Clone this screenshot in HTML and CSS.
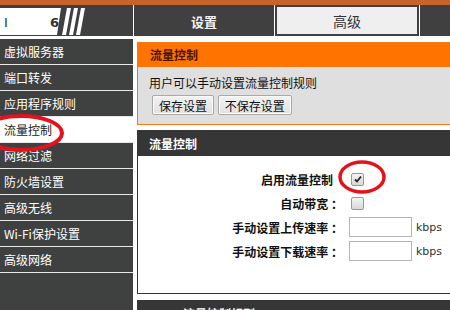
FILE: index.html
```html
<!DOCTYPE html>
<html lang="zh-CN">
<head>
  <meta charset="UTF-8" />
  <title>流量控制</title>
  <link rel="stylesheet" href="styles.css">
</head>
<body>

  <div class="top-strip"></div>

  <!-- Header with logo and tabs -->
  <div class="header">
    <div class="logo">
      <svg width="133" height="31" viewBox="0 0 133 31">
        <polygon points="0,3 61,3 57,30 0,30" fill="#fff" />
        <polygon points="67,3 71,3 66,30 62,30" fill="#fff" />
        <polygon points="74,3 78,3 73,30 69,30" fill="#fff" />
        <polygon points="81,3 85,3 80,30 76,30" fill="#fff" />
        <text x="4" y="22" class="logo-text thin">I</text>
        <text x="50" y="22" class="logo-text">6</text>
      </svg>
    </div>
    <div class="tab">设置</div>
    <div class="tab active"><span>高级</span></div>
    <div class="tab"></div>
  </div>

  <div class="wrap">
    <ul class="side">
      <li>虚拟服务器</li>
      <li>端口转发</li>
      <li>应用程序规则</li>
      <li class="current">流量控制</li>
      <li>网络过滤</li>
      <li>防火墙设置</li>
      <li>高级无线</li>
      <li>Wi-Fi保护设置</li>
      <li>高级网络</li>
    </ul>

    <div class="main">
      <div class="box box-orange">
        <div class="box-head">流量控制</div>
        <div class="box-body">
          <p class="intro">用户可以手动设置流量控制规则</p>
          <button class="btn first-btn">保存设置</button>
          <button class="btn">不保存设置</button>
        </div>
      </div>

      <div class="box box-dark">
        <div class="box-head">流量控制</div>
        <div class="box-body form">
          <div class="row">
            <label class="first">启用流量控制</label>
            <span class="check on">
              <svg width="8" height="8" viewBox="0 0 8 8"><polyline points="1,4.5 3,6.5 7,1.5" fill="none" stroke="#222" stroke-width="1.8" /></svg>
            </span>
          </div>
          <div class="row">
            <label>自动带宽 ：</label>
            <span class="check"></span>
          </div>
          <div class="row">
            <label>手动设置上传速率 ：</label>
            <input type="text" class="rate">
            <span class="unit">kbps</span>
          </div>
          <div class="row">
            <label>手动设置下载速率 ：</label>
            <input type="text" class="rate">
            <span class="unit">kbps</span>
          </div>
        </div>
      </div>

      <div class="box box-dark">
        <div class="box-head indent">流量控制规则</div>
      </div>
    </div>
  </div>

  <!-- red marks drawn over the screenshot -->
  <svg class="marks" width="450" height="310">
    <ellipse cx="21" cy="133" rx="41" ry="17" fill="none" stroke="#e3121c" stroke-width="4" />
    <ellipse cx="362" cy="177" rx="22" ry="15" fill="none" stroke="#e3121c" stroke-width="3.5" />
  </svg>

</body>
</html>
```

FILE: styles.css
```css
body {
  margin: 0;
  width: 450px;
  height: 310px;
  overflow: hidden;
  position: relative;
  background: #fff;
  font-family: "Noto Sans CJK SC", "DejaVu Sans", sans-serif;
  font-size: 12px;
}

.top-strip {
  height: 5px;
  background: #c8612a;
}

.header {
  display: flex;
  height: 31px;
  background: #404040;
}

.logo {
  width: 133px;
  flex: none;
}

.logo svg {
  display: block;
}

.logo-text {
  font-family: "DejaVu Sans", sans-serif;
  font-size: 13px;
  font-weight: bold;
  fill: #333;
}

.logo-text.thin {
  font-weight: normal;
}

.tab {
  width: 140px;
  flex: none;
  border-left: 1px solid #fff;
  color: #f2f2f2;
  font-weight: bold;
  font-size: 13px;
  text-align: center;
  line-height: 33px;
}

.tab.active {
  padding: 2px;
}

.tab.active span {
  display: block;
  height: 27px;
  line-height: 29px;
  background: #efefef;
  color: #333;
  font-weight: normal;
  font-size: 14px;
}

.wrap {
  display: flex;
  margin-top: 3px;
}

.side {
  list-style: none;
  margin: 0;
  padding: 0;
  width: 133px;
  height: 280px;
  flex: none;
  background: #3f4140;
}

.side li {
  height: 25px;
  line-height: 25px;
  border-bottom: 1px solid #e8e8e8;
  color: #fff;
  padding-left: 4px;
  font-size: 12px;
}

.side li.current {
  background: #fff;
  color: #222;
}

.main {
  width: 330px;
  flex: none;
  margin-left: 4px;
  padding-top: 3px;
}

.box {
  margin-bottom: 5px;
}

.box-head {
  height: 25px;
  line-height: 25px;
  padding-left: 12px;
  font-weight: bold;
  font-size: 12px;
}

.box-head.indent {
  padding-left: 46px;
}

.box-orange {
  border: 1px solid #f47a16;
}

.box-orange .box-head {
  height: 24px;
  line-height: 24px;
  background: #ff7300;
  color: #4a1400;
}

.box-orange .box-body {
  background: #dfdfdf;
  padding: 8px 11px 9px;
}

.intro {
  margin: 0 0 4px;
  line-height: 16px;
  color: #111;
}

.btn {
  height: 20px;
  padding: 0 6px;
  margin-right: 1px;
  font-family: inherit;
  font-size: 12px;
  color: #111;
  background: linear-gradient(#f2f2f2, #e2e2e2);
  border: 1px solid #a9a9a9;
  border-radius: 2px;
  box-shadow: inset 0 0 0 1px #fafafa;
}

.first-btn {
  margin-left: 3px;
}

.box-dark {
  margin-bottom: 6px;
}

.box-dark .box-head {
  height: 26px;
  line-height: 27px;
  background: #363636;
  color: #fff;
}

.form {
  border: 1px solid #333;
  border-top: none;
  padding: 11px 0 30px;
}

.row {
  display: flex;
  align-items: center;
  height: 24px;
}

.row label {
  width: 205px;
  flex: none;
  text-align: right;
  font-weight: bold;
  color: #111;
}

.row label.first {
  padding-right: 10px;
  width: 195px;
}

.check {
  width: 11px;
  height: 11px;
  margin-left: 8px;
  border: 1px solid #999;
  border-radius: 2px;
  background: linear-gradient(#f4f4f4, #d8d8d8);
  display: flex;
  align-items: center;
  justify-content: center;
}

.rate {
  width: 61px;
  height: 18px;
  padding: 0;
  margin: 0 0 0 6px;
  border: 1px solid #b5b5b5;
  box-sizing: content-box;
}

.unit {
  margin-left: 4px;
  font-family: "DejaVu Sans", sans-serif;
  font-size: 11px;
  color: #333;
}

.marks {
  position: absolute;
  left: 0;
  top: 0;
  pointer-events: none;
}
```
